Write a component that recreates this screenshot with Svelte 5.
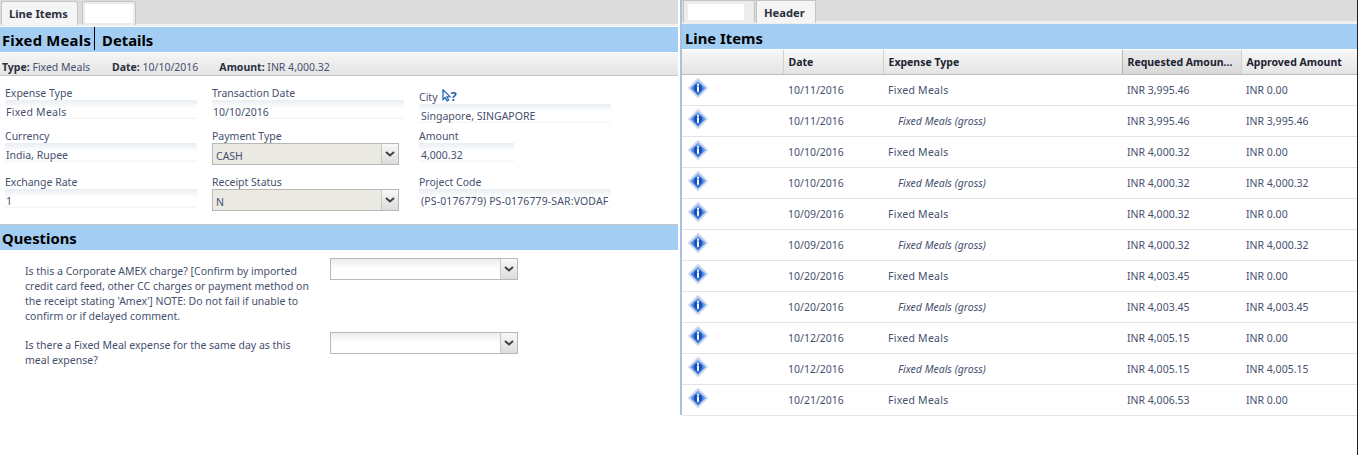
<script>
    const rows = [
        ["10/11/2016", "Fixed Meals", "INR 3,995.46", "INR 0.00", false],
        ["10/11/2016", "Fixed Meals (gross)", "INR 3,995.46", "INR 3,995.46", true],
        ["10/10/2016", "Fixed Meals", "INR 4,000.32", "INR 0.00", false],
        ["10/10/2016", "Fixed Meals (gross)", "INR 4,000.32", "INR 4,000.32", true],
        ["10/09/2016", "Fixed Meals", "INR 4,000.32", "INR 0.00", false],
        ["10/09/2016", "Fixed Meals (gross)", "INR 4,000.32", "INR 4,000.32", true],
        ["10/20/2016", "Fixed Meals", "INR 4,003.45", "INR 0.00", false],
        ["10/20/2016", "Fixed Meals (gross)", "INR 4,003.45", "INR 4,003.45", true],
        ["10/12/2016", "Fixed Meals", "INR 4,005.15", "INR 0.00", false],
        ["10/12/2016", "Fixed Meals (gross)", "INR 4,005.15", "INR 4,005.15", true],
        ["10/21/2016", "Fixed Meals", "INR 4,006.53", "INR 0.00", false]
    ];
</script>

{#snippet arrow()}
    <span class="arrow">
        <svg width="10" height="6" viewBox="0 0 10 6"><path d="M1 1 L5 4.5 L9 1" fill="none" stroke="#3a3f4a" stroke-width="2" /></svg>
    </span>
{/snippet}

<div class="page">
    <section class="left">
        <div class="tabs">
            <div class="tab active">Line Items</div>
            <div class="tab blank"></div>
        </div>
        <h2 class="title"><span class="first">Fixed Meals</span><span>Details</span></h2>
        <div class="summary">
            <span class="type"><b>Type:</b> Fixed Meals</span>
            <span><b>Date:</b> 10/10/2016</span>
            <span><b>Amount:</b> INR 4,000.32</span>
        </div>
        <div class="form">
            <div class="field">
                <div class="label">Expense Type</div>
                <div class="value wide">Fixed Meals</div>
            </div>
            <div class="field">
                <div class="label">Transaction Date</div>
                <div class="value">10/10/2016</div>
            </div>
            <div class="field city">
                <div class="label city-label">
                    <span>City</span>
                    <svg class="pick" width="9" height="13" viewBox="0 0 9 13">
                        <path d="M1 0.8 V10.5 L3.2 8.5 L5 12 L6.6 11.2 L5 7.8 L8 7.6 Z" fill="#fff" stroke="#2a66b8" stroke-width="1.3" />
                    </svg>
                    <span class="q">?</span>
                </div>
                <div class="value">Singapore, SINGAPORE</div>
            </div>

            <div class="field">
                <div class="label">Currency</div>
                <div class="value">India, Rupee</div>
            </div>
            <div class="field">
                <div class="label">Payment Type</div>
                <div class="select disabled">CASH{@render arrow()}</div>
            </div>
            <div class="field short">
                <div class="label">Amount</div>
                <div class="value">4,000.32</div>
            </div>

            <div class="field">
                <div class="label">Exchange Rate</div>
                <div class="value">1</div>
            </div>
            <div class="field">
                <div class="label">Receipt Status</div>
                <div class="select disabled">N{@render arrow()}</div>
            </div>
            <div class="field project">
                <div class="label">Project Code</div>
                <div class="value">(PS-0176779) PS-0176779-SAR:VODAF</div>
            </div>
        </div>
        <h2 class="title questions">Questions</h2>
        <div class="question">
            <p>Is this a Corporate AMEX charge? [Confirm by imported credit card feed, other CC charges or payment method on the receipt stating 'Amex'] NOTE: Do not fail if unable to confirm or if delayed comment.</p>
            <div class="select blank-select">{@render arrow()}</div>
        </div>
        <div class="question">
            <p>Is there a Fixed Meal expense for the same day as this meal expense?</p>
            <div class="select blank-select">{@render arrow()}</div>
        </div>
    </section>

    <section class="right">
        <div class="right-inner">
            <div class="tabs right-tabs">
                <div class="tab blank"></div>
                <div class="tab active">Header</div>
            </div>
            <h2 class="title list-title">Line Items</h2>
            <table>
                <colgroup>
                    <col style="width:101px" />
                    <col style="width:100px" />
                    <col style="width:239px" />
                    <col style="width:119px" />
                    <col />
                </colgroup>
                <thead>
                    <tr>
                        <th></th>
                        <th>Date</th>
                        <th>Expense Type</th>
                        <th class="sorted">Requested Amoun...</th>
                        <th>Approved Amount</th>
                    </tr>
                </thead>
                <tbody>
                    {#each rows as r}
                        <tr>
                            <td class="icon">
                                <svg width="20" height="20" viewBox="0 0 20 20">
                                    <defs>
                                        <linearGradient id="gem" x1="0" y1="0" x2="0" y2="1">
                                            <stop offset="0" stop-color="#8ab8f2" />
                                            <stop offset="1" stop-color="#2a68d4" />
                                        </linearGradient>
                                    </defs>
                                    <path d="M10 1 L19 10 L10 19 L1 10 Z" fill="url(#gem)" stroke="#cdd8ee" stroke-width="1.8" stroke-linejoin="round" />
                                    <circle cx="10" cy="10" r="4.2" fill="#1450c0" />
                                    <rect x="9" y="6" width="2" height="1.8" fill="#fff" />
                                    <rect x="9" y="8.4" width="2" height="5.4" fill="#fff" />
                                </svg>
                            </td>
                            <td>{r[0]}</td>
                            <td class:gross={r[4]} class:wide={!r[4]}>{r[1]}</td>
                            <td>{r[2]}</td>
                            <td>{r[3]}</td>
                        </tr>
                    {/each}
                </tbody>
            </table>
        </div>
    </section>
</div>

<style>
    :global(body) {
        margin: 0;
        background: #fff;
    }

    .page {
        display: flex;
        width: 1360px;
        height: 455px;
        overflow: hidden;
        font-family: "Noto Sans", "DejaVu Sans", sans-serif;
        font-size: 10.5px;
        color: #46506e;
    }

    .left {
        width: 678px;
        flex: none;
    }

    .right {
        box-sizing: border-box;
        width: 678px;
        margin-left: 2px;
        border-right: 1px solid #222;
        flex: none;
    }

    .right-inner {
        box-sizing: border-box;
        height: 415px;
        border-left: 2px solid #a9bfe3;
    }

    .tabs {
        display: flex;
        gap: 4px;
        height: 24px;
        padding-left: 1px;
        background: #dcdcdc;
        border-bottom: 2px solid #efefef;
    }

    .tab {
        box-sizing: border-box;
        margin-top: 1px;
        height: 24px;
        border: 1px solid #c4c4c4;
        border-bottom: 0;
        border-radius: 3px 3px 0 0;
        background: #f5f5f5;
    }

    .tab.active {
        padding: 4px 9px 0 7px;
        font-size: 11.2px;
        font-weight: 700;
        color: #2a3040;
    }

    .tab.blank {
        width: 54px;
        background: #fff;
        box-shadow: inset 0 0 0 2px #ececec;
    }

    .right-tabs {
        height: 21px;
        padding-left: 1px;
        gap: 1px;
        border-bottom-width: 3px;
    }

    .right-tabs .tab {
        margin-top: 0;
        height: 23px;
    }

    .right-tabs .tab.active {
        width: 60px;
        border-radius: 0;
    }

    .right-tabs .tab.blank {
        width: 72px;
        border-radius: 0;
        background: #fff;
        box-shadow: inset 4px 3px 0 #ececec, inset -10px -3px 0 #ececec;
    }

    .title {
        margin: 1px 0 0;
        height: 25px;
        padding-left: 2px;
        background: #a3cdf2;
        color: #000;
        font-size: 14.8px;
        font-weight: 700;
        line-height: 27px;
    }

    .first {
        display: inline-block;
        height: 23px;
        line-height: 27px;
        margin-right: 7px;
        padding-right: 3px;
        border-right: 1px solid #000;
        letter-spacing: 0.25px;
        vertical-align: top;
    }

    .summary {
        display: flex;
        gap: 21px;
        box-sizing: border-box;
        height: 23px;
        margin-top: 1px;
        padding: 7px 2px 0;
        background: linear-gradient(#f5f5f5, #e4e4e4);
        border-bottom: 1px solid #c6c6c6;
    }

    .summary .type {
        min-width: 89px;
    }

    .summary b {
        color: #2a3040;
    }

    .form {
        display: grid;
        grid-template-columns: 192px 192px 192px;
        grid-template-rows: 43px 46px 42px;
        column-gap: 15px;
        height: 148px;
        padding: 10px 0 0 5px;
        box-sizing: border-box;
    }

    .label {
        height: 14px;
        line-height: 14px;
    }

    .city-label {
        display: flex;
        gap: 4px;
    }

    .value {
        height: 19px;
        padding-left: 1px;
        line-height: 24px;
        white-space: nowrap;
        background: linear-gradient(#e9eef2, #fff 45%, #fff 88%, #f3f3f3);
    }

    .wide {
        letter-spacing: 0.25px;
    }

    .field.city {
        padding-top: 4px;
    }

    .field.city .value {
        padding-left: 2px;
    }

    .field.project .value {
        padding-left: 2px;
        letter-spacing: 0.12px;
    }

    .field.short .value {
        width: 93px;
        padding-left: 2px;
    }

    .pick {
        margin-top: -1px;
    }

    .q {
        margin: -1px 0 0 -4px;
        color: #2a66b8;
        font-size: 13px;
        font-weight: 700;
        line-height: 14px;
    }

    .select {
        position: relative;
        box-sizing: border-box;
        width: 187px;
        height: 22px;
        line-height: 24px;
        padding-left: 3px;
        border: 1px solid #b8b8b8;
    }

    .select.disabled {
        background: #eaeae3;
    }

    .blank-select {
        flex: none;
        width: 188px;
        background: linear-gradient(#ececec, #fff 50%);
    }

    .arrow {
        position: absolute;
        top: 0;
        right: 0;
        bottom: 0;
        width: 16px;
        display: flex;
        align-items: center;
        justify-content: center;
        background: linear-gradient(#f8f8f8, #dcdcdc);
        border-left: 1px solid #c8c8c8;
    }

    .questions {
        margin-top: 0;
        border-top: 1px solid #c8c8c8;
    }

    .question {
        display: flex;
        align-items: flex-start;
        padding-left: 25px;
        margin-top: 8px;
    }

    .question p {
        flex: none;
        width: 287px;
        margin: 6px 18px 0 0;
        line-height: 15px;
    }

    table {
        width: 100%;
        border-collapse: collapse;
        table-layout: fixed;
    }

    .list-title {
        margin: 0 0 1px;
        padding-left: 3px;
        line-height: 28px;
    }

    th {
        box-sizing: border-box;
        height: 24px;
        padding: 1px 5px 0;
        text-align: left;
        font-weight: 700;
        color: #1c2230;
        background: linear-gradient(#f7f7f7, #e4e4e4);
        border-bottom: 1px solid #bcbcbc;
        border-left: 1px solid #d0d0d0;
        white-space: nowrap;
    }

    th:first-child {
        border-left: 0;
    }

    th.sorted {
        background: linear-gradient(#ececec, #d8d8d8);
        border-left-color: #b4b4b4;
    }

    td {
        box-sizing: border-box;
        height: 31px;
        padding: 1px 5px 0;
        border-bottom: 1px solid #e4e4e4;
        white-space: nowrap;
    }

    td.icon {
        padding: 0 0 4px 6px;
    }

    td.icon svg {
        display: block;
    }

    td.gross {
        padding-left: 15px;
        font-style: italic;
    }
</style>
